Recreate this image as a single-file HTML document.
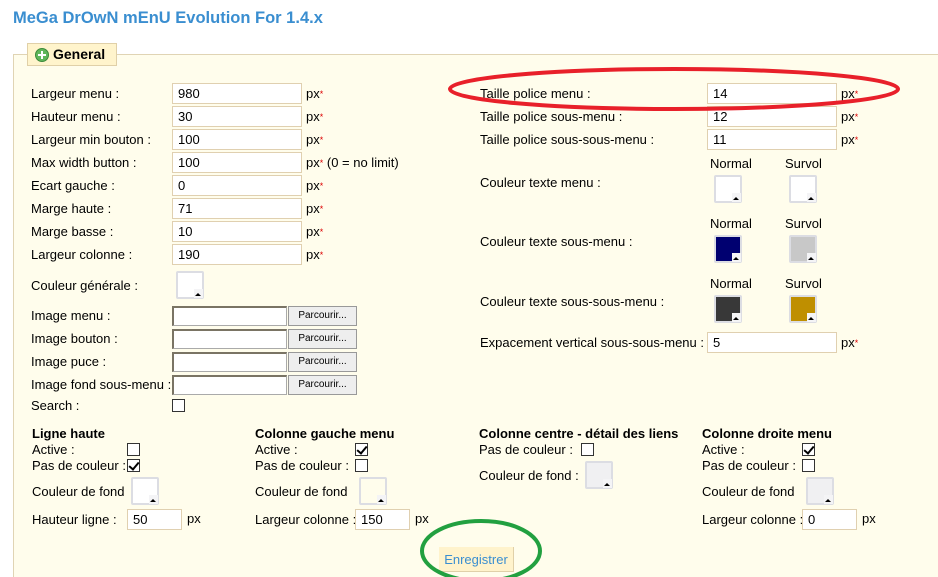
<!DOCTYPE html>
<html style="overflow:hidden;height:577px"><head><meta charset="utf-8"><style>
*{margin:0;padding:0;box-sizing:border-box}
body{width:938px;height:577px;background:#fff;font-family:"Liberation Sans",Arial,sans-serif;font-size:13px;color:#000;position:relative;overflow:hidden}
.a{position:absolute;white-space:nowrap}
.t{line-height:14px}
.in{position:absolute;height:21px;background:#fff;border:1px solid #e0d0b0;padding-left:5px;line-height:20px;font-size:13px}
.fi{position:absolute;height:20px;width:115px;background:#fff;border:1px solid #aaa;border-top:2px solid #7a7464;border-left:2px solid #7a7464}
.bt{position:absolute;height:20px;width:69px;background:#eee;border:1px solid #999;font-size:10px;text-align:center;line-height:18px}
.cb{position:absolute;width:13px;height:13px;border:1px solid #333;background:#fff}
.cb.k::after{content:"";position:absolute;left:3px;top:0px;width:4px;height:8px;border:solid #000;border-width:0 2px 2px 0;transform:rotate(40deg)}
.sw{position:absolute;width:28px;height:28px;border:2px solid #dcdde3;border-radius:2px;background:#fff}
.sw::after{content:"";position:absolute;right:-1px;bottom:-1px;width:9px;height:9px;background:#f4f4f6;}
.sw::before{content:"";position:absolute;right:1px;bottom:1px;width:0;height:0;border-left:3px solid transparent;border-right:3px solid transparent;border-bottom:3px solid #000;z-index:2}
.px{position:absolute}
.px b{color:#d00;font-weight:normal;font-size:9px;vertical-align:top}
</style></head><body>
<div class="a" style="left:13px;top:9px;font-size:16.5px;font-weight:bold;color:#3a8ed0">MeGa DrOwN mEnU Evolution For 1.4.x</div>
<div class="a" style="left:13px;top:54px;width:925px;height:523px;background:#fffdec;border:1px solid #e0d4b4;border-bottom:none;border-right:none"></div>
<div class="a" style="left:27px;top:43px;width:90px;height:23px;background:#fff4cc;border:1px solid #e0d0a8"></div>
<div class="a" style="left:35px;top:48px;width:14px;height:14px;border-radius:50%;background:#5fb65a;border:1px solid #3c8a3a"></div>
<div class="a" style="left:38px;top:54px;width:8px;height:2px;background:#fff"></div>
<div class="a" style="left:41px;top:51px;width:2px;height:8px;background:#fff"></div>
<div class="a t" style="left:53px;top:47px;font-size:14px;font-weight:bold">General</div>

<div class="a t" style="left:31px;top:87px">Largeur menu :</div>
<div class="a t" style="left:31px;top:110px">Hauteur menu :</div>
<div class="a t" style="left:31px;top:133px">Largeur min bouton :</div>
<div class="a t" style="left:31px;top:156px">Max width button :</div>
<div class="a t" style="left:31px;top:179px">Ecart gauche :</div>
<div class="a t" style="left:31px;top:202px">Marge haute :</div>
<div class="a t" style="left:31px;top:225px">Marge basse :</div>
<div class="a t" style="left:31px;top:248px">Largeur colonne :</div>
<div class="in" style="left:172px;top:83px;width:130px">980</div>
<div class="in" style="left:172px;top:106px;width:130px">30</div>
<div class="in" style="left:172px;top:129px;width:130px">100</div>
<div class="in" style="left:172px;top:152px;width:130px">100</div>
<div class="in" style="left:172px;top:175px;width:130px">0</div>
<div class="in" style="left:172px;top:198px;width:130px">71</div>
<div class="in" style="left:172px;top:221px;width:130px">10</div>
<div class="in" style="left:172px;top:244px;width:130px">190</div>
<div class="px t" style="left:306px;top:87px">px<b>*</b></div>
<div class="px t" style="left:306px;top:110px">px<b>*</b></div>
<div class="px t" style="left:306px;top:133px">px<b>*</b></div>
<div class="px t" style="left:306px;top:156px">px<b>*</b> (0 = no limit)</div>
<div class="px t" style="left:306px;top:179px">px<b>*</b></div>
<div class="px t" style="left:306px;top:202px">px<b>*</b></div>
<div class="px t" style="left:306px;top:225px">px<b>*</b></div>
<div class="px t" style="left:306px;top:248px">px<b>*</b></div>
<div class="a t" style="left:31px;top:279px">Couleur générale :</div>
<div class="sw" style="left:176px;top:271px"></div>
<div class="a t" style="left:31px;top:309px">Image menu :</div>
<div class="a t" style="left:31px;top:332px">Image bouton :</div>
<div class="a t" style="left:31px;top:355px">Image puce :</div>
<div class="a t" style="left:31px;top:378px">Image fond sous-menu :</div>
<div class="fi" style="left:172px;top:306px"></div><div class="bt" style="left:288px;top:306px">Parcourir...</div>
<div class="fi" style="left:172px;top:329px"></div><div class="bt" style="left:288px;top:329px">Parcourir...</div>
<div class="fi" style="left:172px;top:352px"></div><div class="bt" style="left:288px;top:352px">Parcourir...</div>
<div class="fi" style="left:172px;top:375px"></div><div class="bt" style="left:288px;top:375px">Parcourir...</div>
<div class="a t" style="left:31px;top:399px">Search :</div>
<div class="cb" style="left:172px;top:399px"></div>

<div class="a t" style="left:480px;top:87px">Taille police menu :</div>
<div class="a t" style="left:480px;top:110px">Taille police sous-menu :</div>
<div class="a t" style="left:480px;top:133px">Taille police sous-sous-menu :</div>
<div class="in" style="left:707px;top:83px;width:130px">14</div>
<div class="in" style="left:707px;top:106px;width:130px">12</div>
<div class="in" style="left:707px;top:129px;width:130px">11</div>
<div class="px t" style="left:841px;top:87px">px<b>*</b></div>
<div class="px t" style="left:841px;top:110px">px<b>*</b></div>
<div class="px t" style="left:841px;top:133px">px<b>*</b></div>
<div class="a t" style="left:710px;top:157px">Normal</div><div class="a t" style="left:785px;top:157px">Survol</div>
<div class="a t" style="left:480px;top:176px">Couleur texte menu :</div>
<div class="sw" style="left:714px;top:175px"></div><div class="sw" style="left:789px;top:175px"></div>
<div class="a t" style="left:710px;top:217px">Normal</div><div class="a t" style="left:785px;top:217px">Survol</div>
<div class="a t" style="left:480px;top:235px">Couleur texte sous-menu :</div>
<div class="sw" style="left:714px;top:235px;background:#000070"></div><div class="sw" style="left:789px;top:235px;background:#c8c8c8"></div>
<div class="a t" style="left:710px;top:277px">Normal</div><div class="a t" style="left:785px;top:277px">Survol</div>
<div class="a t" style="left:480px;top:295px">Couleur texte sous-sous-menu :</div>
<div class="sw" style="left:714px;top:295px;background:#383838"></div><div class="sw" style="left:789px;top:295px;background:#bf8f00"></div>
<div class="a t" style="left:480px;top:336px">Expacement vertical sous-sous-menu :</div>
<div class="in" style="left:707px;top:332px;width:130px">5</div>
<div class="px t" style="left:841px;top:336px">px<b>*</b></div>

<div class="a t" style="left:32px;top:427px;font-weight:bold">Ligne haute</div>
<div class="a t" style="left:32px;top:443px">Active :</div><div class="cb" style="left:127px;top:443px"></div>
<div class="a t" style="left:32px;top:459px">Pas de couleur :</div><div class="cb k" style="left:127px;top:459px"></div>
<div class="a t" style="left:32px;top:485px">Couleur de fond</div><div class="sw" style="left:131px;top:477px"></div>
<div class="a t" style="left:32px;top:513px">Hauteur ligne :</div><div class="in" style="left:127px;top:509px;width:55px">50</div><div class="px t" style="left:187px;top:512px">px</div>

<div class="a t" style="left:255px;top:427px;font-weight:bold">Colonne gauche menu</div>
<div class="a t" style="left:255px;top:443px">Active :</div><div class="cb k" style="left:355px;top:443px"></div>
<div class="a t" style="left:255px;top:459px">Pas de couleur :</div><div class="cb" style="left:355px;top:459px"></div>
<div class="a t" style="left:255px;top:485px">Couleur de fond</div><div class="sw" style="left:359px;top:477px;background:#fffdec"></div>
<div class="a t" style="left:255px;top:513px">Largeur colonne :</div><div class="in" style="left:355px;top:509px;width:55px">150</div><div class="px t" style="left:415px;top:512px">px</div>

<div class="a t" style="left:479px;top:427px;font-weight:bold">Colonne centre - détail des liens</div>
<div class="a t" style="left:479px;top:443px">Pas de couleur :</div><div class="cb" style="left:581px;top:443px"></div>
<div class="a t" style="left:479px;top:469px">Couleur de fond :</div><div class="sw" style="left:585px;top:461px;background:#f0f0f2"></div>

<div class="a t" style="left:702px;top:427px;font-weight:bold">Colonne droite menu</div>
<div class="a t" style="left:702px;top:443px">Active :</div><div class="cb k" style="left:802px;top:443px"></div>
<div class="a t" style="left:702px;top:459px">Pas de couleur :</div><div class="cb" style="left:802px;top:459px"></div>
<div class="a t" style="left:702px;top:485px">Couleur de fond</div><div class="sw" style="left:806px;top:477px;background:#f0f0f2"></div>
<div class="a t" style="left:702px;top:513px">Largeur colonne :</div><div class="in" style="left:802px;top:509px;width:55px">0</div><div class="px t" style="left:862px;top:512px">px</div>

<div class="a" style="left:439px;top:547px;width:75px;height:25px;background:#fff3cc;border-right:1px solid #e0d0a8;border-bottom:1px solid #e0d0a8;color:#3a8ed0;text-align:center;line-height:25px">Enregistrer</div>

<svg class="a" style="left:0;top:0" width="938" height="577">
<ellipse cx="674" cy="89" rx="224" ry="20" fill="none" stroke="#e8202a" stroke-width="4"/>
<ellipse cx="481" cy="551" rx="59" ry="30" fill="none" stroke="#22a040" stroke-width="4"/>
</svg>
</body></html>
